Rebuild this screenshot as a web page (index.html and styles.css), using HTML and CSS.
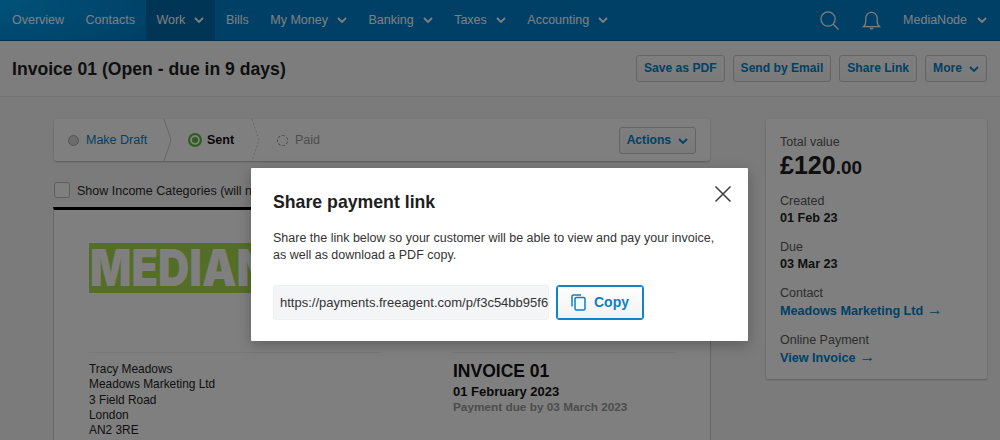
FILE: index.html
```html
<!DOCTYPE html>
<html lang="en">
<head>
<meta charset="utf-8">
<title>Invoice 01</title>
<link rel="stylesheet" href="styles.css">
</head>
<body>
<nav class="nav">
  <a class="nav-item">Overview</a>
  <a class="nav-item">Contacts</a>
  <a class="nav-item nav-current">Work<svg class="chev" viewBox="0 0 10 6"><path d="M1 1l4 4 4-4"/></svg></a>
  <a class="nav-item">Bills</a>
  <a class="nav-item">My Money<svg class="chev" viewBox="0 0 10 6"><path d="M1 1l4 4 4-4"/></svg></a>
  <a class="nav-item">Banking<svg class="chev" viewBox="0 0 10 6"><path d="M1 1l4 4 4-4"/></svg></a>
  <a class="nav-item">Taxes<svg class="chev" viewBox="0 0 10 6"><path d="M1 1l4 4 4-4"/></svg></a>
  <a class="nav-item">Accounting<svg class="chev" viewBox="0 0 10 6"><path d="M1 1l4 4 4-4"/></svg></a>
  <div class="nav-right">
    <svg class="nav-icon nav-search" viewBox="0 0 20 20"><circle cx="8.500" cy="8.500" r="7.500"/><path d="M14 14l5.500 5.500"/></svg>
    <svg class="nav-icon nav-bell" viewBox="0 0 20 20"><path d="M1.500 16.500c2-1.500 2.500-3 2.500-6V7.500a6 6 0 0 1 12 0V10.500c0 3 .5 4.500 2.500 6z"/><path class="bell-dot" d="M8 17.500h4a2 2 0 0 1-4 0z"/></svg>
    <a class="nav-user">MediaNode<svg class="chev chev-user" viewBox="0 0 10 6"><path d="M1 1l4 4 4-4"/></svg></a>
  </div>
</nav>

<header class="head">
  <h1 class="title">Invoice 01 (Open - due in 9 days)</h1>
  <div class="head-actions">
    <a class="btn">Save as PDF</a>
    <a class="btn">Send by Email</a>
    <a class="btn">Share Link</a>
    <a class="btn">More<svg class="chev chev-blue" viewBox="0 0 10 6"><path d="M1 1l4 4 4-4"/></svg></a>
  </div>
</header>

<main class="main">
  <section class="col">
    <div class="stepper">
      <div class="step step-draft"><i class="dot dot-grey"></i><a class="step-link">Make Draft</a></div>
      <svg class="step-sep" viewBox="0 0 10 42"><path d="M1 0l7 21L1 42"/></svg>
      <div class="step step-sent"><i class="dot dot-green"></i><b>Sent</b></div>
      <svg class="step-sep step-sep-light" viewBox="0 0 10 42"><path d="M1 0l7 21L1 42"/></svg>
      <div class="step step-paid"><i class="dot dot-empty"></i><span>Paid</span></div>
      <a class="btn btn-actions">Actions<svg class="chev chev-blue" viewBox="0 0 10 6"><path d="M1 1l4 4 4-4"/></svg></a>
    </div>
    <label class="check"><i class="box"></i>Show Income Categories (will not show on invoice)</label>
    <article class="sheet">
      <div class="logo"><span class="logo-text">MEDIANODE</span></div>
      <div class="sheet-cols">
        <address class="addr">Tracy Meadows<br>Meadows Marketing Ltd<br>3 Field Road<br>London<br>AN2 3RE</address>
        <div class="inv">
          <div class="inv-no">INVOICE 01</div>
          <div class="inv-date">01 February 2023</div>
          <div class="inv-due">Payment due by 03 March 2023</div>
        </div>
      </div>
    </article>
  </section>
  <aside class="card">
    <div class="lab">Total value</div>
    <div class="total">£120<small>.00</small></div>
    <div class="lab">Created</div>
    <div class="val">01 Feb 23</div>
    <div class="lab lab-gap">Due</div>
    <div class="val">03 Mar 23</div>
    <div class="lab lab-gap">Contact</div>
    <a class="val val-link">Meadows Marketing Ltd <span class="arrow">→</span></a>
    <div class="lab lab-gap">Online Payment</div>
    <a class="val val-link">View Invoice <span class="arrow">→</span></a>
  </aside>
</main>

<div class="scrim"></div>
<div class="modal">
  <svg class="close" viewBox="0 0 18 18"><path d="M1.500 1.500l15 15M16.500 1.500l-15 15"/></svg>
  <h2 class="modal-title">Share payment link</h2>
  <p class="modal-text">Share the link below so your customer will be able to view and pay your invoice,<br>as well as download a PDF copy.</p>
  <div class="copy-row">
    <div class="url"><span class="url-text">https://payments.freeagent.com/p/f3c54bb95f6e1a7d</span></div>
    <a class="copy"><svg class="copy-icon" viewBox="0 0 15 17"><path d="M1 12.500V2.200A1.300 1.300 0 0 1 2.300 .9H10"/><rect x="4" y="3.500" width="10" height="12.500" rx="1.500"/></svg>Copy</a>
  </div>
</div>
</body>
</html>
```
FILE: styles.css
```css
* { box-sizing: border-box; }
html, body { margin: 0; height: 440px; overflow: hidden; }
body { position: relative; background: #f6f6f6; color: #1e1e1e; font: 12.500px/1.2 "Liberation Sans", Arial, sans-serif; }
a { text-decoration: none; }

.nav { display: flex; align-items: stretch; height: 41px; padding-left: 1.250px; background: radial-gradient(ellipse 170px 70px at 0 0, #00a4f4, #0080cc); border-bottom: 1px solid #005a91; }
.nav-item { display: flex; align-items: center; padding: 0 10.750px; color: #fff; }
.nav-current { background: #006aaa; }
.nav-right { margin-left: auto; display: flex; align-items: center; padding-right: 13px; }
.nav-icon { width: 19px; height: 19px; fill: none; stroke: #fff; stroke-width: 1.300; }
.nav-search { margin-right: 23px; }
.nav-bell { margin-right: 22px; }
.nav-icon .bell-dot { fill: #fff; stroke: none; }
.nav-user { color: #fff; display: flex; align-items: center; }
.chev { width: 10px; height: 6px; margin-left: 9px; fill: none; stroke: #fff; stroke-width: 1.800; }
.chev-user { margin-left: 10px; }
.chev-blue { stroke: #0082cc; margin-left: 7px; }

.head { display: flex; align-items: center; justify-content: space-between; height: 56px; padding: 0 13px 0 12px; background: #fafafa; border-bottom: 1px solid #e4e4e4; }
.title { margin: 2px 0 0; font-size: 17.600px; font-weight: 700; color: #1e1e1e; }
.head-actions { display: flex; gap: 8px; margin-top: -1px; }
.btn { display: flex; align-items: center; height: 27px; padding: 1px 7px 0; border: 1px solid #c8c8c8; border-radius: 3px; color: #0082cc; font-size: 12.100px; font-weight: 700; background: linear-gradient(#fdfdfd, #f5f5f5); }

.main { display: flex; padding: 22px 13px 0 53px; justify-content: space-between; }
.col { width: 658px; }
.stepper { display: flex; align-items: center; height: 42px; margin: 0 1px; background: #fff; border-radius: 3px; box-shadow: 0 1px 2px rgba(0,0,0,.25); padding: 0 14px; }
.step { display: flex; align-items: center; gap: 7px; }
.step-draft { width: 95px; }
.step-sent { width: 63px; margin-left: 15px; gap: 5px; }
.step-sep { width: 10px; height: 42px; flex: none; fill: none; stroke: #cfcfcf; stroke-width: 1; }
.step-sep-light { stroke-dasharray: 2 2; }
.step-paid { margin-left: 16px; color: #9a9a9a; }
.step-link { color: #0082cc; }
.dot { display: block; width: 11px; height: 11px; border-radius: 50%; flex: none; }
.dot-grey { background: #d8d8d8; border: 1px solid #aaa; }
.dot-green { width: 14px; height: 14px; border: 2px solid #5fbf3c; background: #5fbf3c; box-shadow: inset 0 0 0 2px #fff; }
.dot-empty { border: 1px dashed #999; }
.step-sent b { color: #111; }
.btn-actions { margin-left: auto; }

.check { display: flex; align-items: flex-start; height: 16px; line-height: 18px; margin: 21px 0 0 1px; gap: 7px; color: #2a2a2a; white-space: nowrap; }
.box { display: block; width: 16px; height: 16px; background: #fff; border: 1px solid #bbb; border-radius: 3px; }
.sheet { height: 240px; margin-top: 9px; background: #fff; border-top: 3px solid #000; border-left: 1px solid #cfcfcf; border-right: 1px solid #cfcfcf; padding: 33px 35px 0; }
.logo { width: 240px; height: 50px; background: #a8dc50; overflow: hidden; padding-left: 1px; }
.logo-text { display: block; color: #fff; font: 900 51px/50px "Inter", "Liberation Sans", sans-serif; transform: scaleX(.85); transform-origin: 0 0; }
.sheet-cols { display: flex; margin-top: 59px; }
.addr { width: 292px; padding-top: 9px; font-style: normal; font-size: 11.900px; line-height: 15.300px; border-top: 1px solid #eee; color: #222; }
.inv { width: 222px; margin-left: 72px; padding-top: 8px; border-top: 1px solid #eee; }
.inv-no { font-size: 17.500px; font-weight: 700; line-height: 20px; color: #111; }
.inv-date { font-size: 13px; font-weight: 700; color: #111; margin-top: 3px; line-height: 16px; }
.inv-due { font-size: 11.800px; font-weight: 700; color: #999; line-height: 15px; }

.card { width: 221px; height: 260px; background: #fff; border-radius: 2px; box-shadow: 0 1px 2px rgba(0,0,0,.25); padding: 15px 14px; }
.lab { color: #5a5a5a; line-height: 17px; }
.lab-gap { margin-top: 12px; }
.total { font-size: 25px; font-weight: 700; line-height: 28px; color: #1e1e1e; margin-bottom: 11px; }
.total small { font-size: 19px; }
.val { font-size: 12.650px; font-weight: 700; line-height: 17px; color: #1e1e1e; }
.val-link { display: block; color: #0082cc; }
.arrow { font: 400 16px/1 "Liberation Sans", sans-serif; }

.scrim { position: absolute; inset: 0; background: rgba(0,0,0,.5); }
.modal { position: absolute; left: 251px; top: 168px; width: 497px; height: 173px; background: #fff; box-shadow: 0 4px 14px rgba(0,0,0,.25); padding: 24px 22px 0; border-radius: 1px; }
.close { position: absolute; right: 16px; top: 17px; width: 18px; height: 18px; fill: none; stroke: #3c3c3c; stroke-width: 1.500; }
.modal-title { margin: 0; font-size: 17.700px; line-height: 21px; font-weight: 700; color: #1e1e1e; }
.modal-text { margin: 17px 0 0; line-height: 17px; color: #333; }
.copy-row { display: flex; gap: 7px; margin-top: 21px; }
.url { width: 276px; height: 35px; background: #f4f5f7; border: 1px solid #eef0f2; border-radius: 3px; display: flex; align-items: center; padding: 0 0 0 6px; }
.url-text { display: block; width: 268px; overflow: hidden; white-space: nowrap; font-size: 13px; color: #333; }
.copy { display: flex; align-items: center; justify-content: center; gap: 8px; width: 88px; height: 35px; border: 1px solid #0d86c9; box-shadow: inset 0 0 0 1px #0d86c9; border-radius: 3px; color: #0d80c4; font-weight: 700; font-size: 14px; background: linear-gradient(#fff, #f1f2f3); }
.copy-icon { width: 15px; height: 17px; fill: none; stroke: #0d80c4; stroke-width: 1.500; }
```
